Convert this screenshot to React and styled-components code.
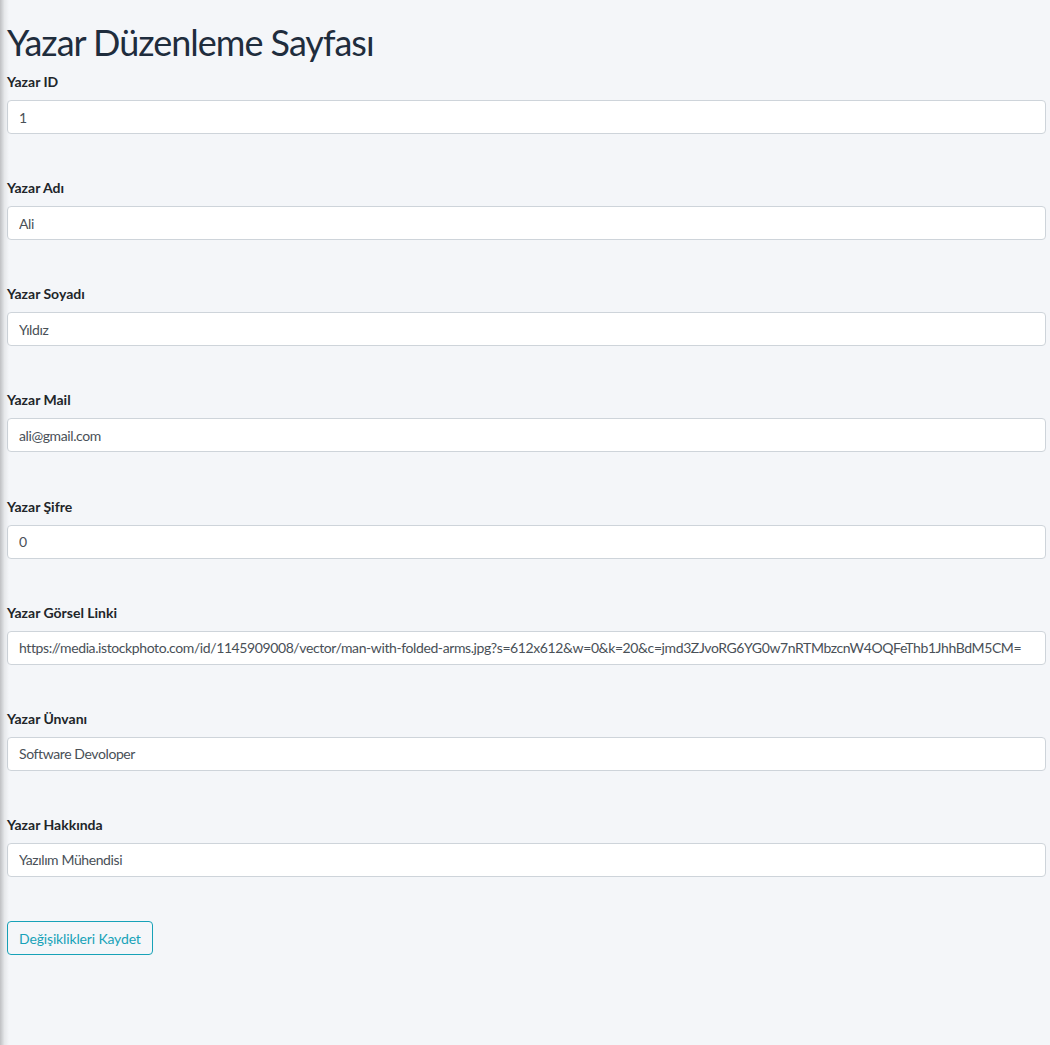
import React from "react";
import styled, { createGlobalStyle } from "styled-components";

const Global = createGlobalStyle`
  html, body { margin: 0; padding: 0; }
  body {
    background: #f4f6f9;
    font-family: Lato, "Noto Sans", sans-serif;
    color: #212529;
  }
`;

const Page = styled.div`
  position: relative;
  min-height: 1045px;
  box-sizing: border-box;
  padding: 18px 4px 0 7px;
  background: #f4f6f9;
  &::before {
    content: "";
    position: absolute;
    left: 0; top: 0; bottom: 0;
    width: 9px;
    background: linear-gradient(to right, rgba(0,0,0,0.22), rgba(0,0,0,0.06) 50%, rgba(0,0,0,0));
  }
`;

const Title = styled.h1`
  margin: 0 0 5px 0;
  font-size: 36px;
  font-weight: 400;
  line-height: 48px;
  color: #1f2d3d;
  letter-spacing: -1px;
`;

const Group = styled.div`
  display: flex;
  flex-direction: column;
  margin-bottom: 43.15px;
`;

const Label = styled.label`
  font-size: 14px;
  font-weight: 700;
  line-height: 21px;
  margin-bottom: 8px;
  color: #212529;
`;

const Input = styled.input`
  box-sizing: border-box;
  width: 100%;
  height: 34px;
  padding: 0 11px;
  font-family: inherit;
  font-size: 14px;
  letter-spacing: -0.4px;
  color: #495057;
  background: #fff;
  border: 1px solid #ced4da;
  border-radius: 4px;
  outline: none;
`;

const Button = styled.button`
  box-sizing: border-box;
  height: 34px;
  padding: 0 11px;
  margin-top: 1px;
  font-family: inherit;
  font-size: 14px;
  letter-spacing: -0.15px;
  color: #17a2b8;
  background: transparent;
  border: 1px solid #17a2b8;
  border-radius: 4px;
  cursor: pointer;
`;

const fields = [
  ["Yazar ID", "1"],
  ["Yazar Adı", "Ali"],
  ["Yazar Soyadı", "Yıldız"],
  ["Yazar Mail", "ali@gmail.com"],
  ["Yazar Şifre", "0"],
  ["Yazar Görsel Linki", "https://media.istockphoto.com/id/1145909008/vector/man-with-folded-arms.jpg?s=612x612&w=0&k=20&c=jmd3ZJvoRG6YG0w7nRTMbzcnW4OQFeThb1JhhBdM5CM="],
  ["Yazar Ünvanı", "Software Devoloper"],
  ["Yazar Hakkında", "Yazılım Mühendisi"],
];

export default function App() {
  return (
    <>
      <Global />
      <Page>
        <Title>Yazar Düzenleme Sayfası</Title>
        {fields.map(([l, v]) => (
          <Group key={l}>
            <Label>{l}</Label>
            <Input defaultValue={v} />
          </Group>
        ))}
        <Button>Değişiklikleri Kaydet</Button>
      </Page>
    </>
  );
}
